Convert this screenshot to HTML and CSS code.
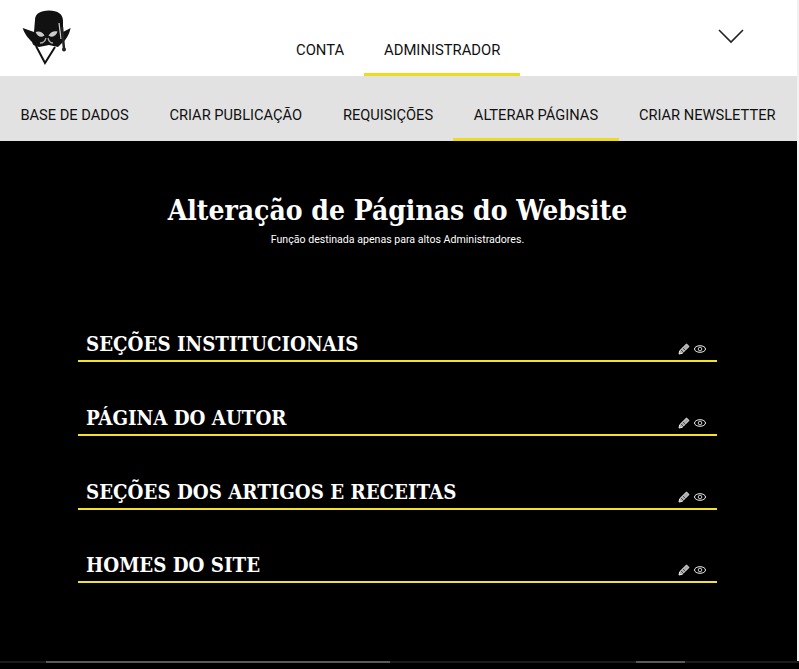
FILE: index.html
```html
<!DOCTYPE html>
<html>
  <head>
    <title>Alterar Páginas</title>
    <link rel="stylesheet" href="styles.css">
  </head>
  <body>
    <div class="frame">
      <header class="topbar">
        <a class="logo" href="#">
          <svg width="56" height="60" viewBox="0 0 56 60">
            <path d="M15 41 L24 58 L34 42" fill="none" stroke="#111" stroke-width="2"/>
            <path d="M1.700 23 L13 27 L14 15 C14 9 19 5.500 28 5.500 C37 5.500 42 9 42 16 L42 27 L49.700 23 C48 30 45 35 41 38 L37 42 L28 40 L18 42 C13 41 12 40 11 37 C7 33 3 28 1.700 23 Z" fill="#111"/>
            <path d="M14.500 27 C18 25.500 21.500 27 23.500 30.500 C20 33 16.500 31.500 14.500 27 Z" fill="#ccc"/>
            <path d="M36.500 26.500 C33 25.500 29.500 27 27.500 30.500 C31 33 35 31.500 36.500 26.500 Z" fill="#ccc"/>
            <path d="M25 33 C24 37 22 38 19 38 M27 33 C28 37 30 38 32 38" fill="none" stroke="#aaa" stroke-width="1.300"/>
            <path d="M38 18 L40 34" stroke="#ccc" stroke-width="1.200"/>
            <path d="M41 22 L43 44" stroke="#222" stroke-width="2.500"/>
            <circle cx="43" cy="44.500" r="2" fill="#222"/>
          </svg>
        </a>
        <nav class="tabs">
          <a class="tab" href="#">CONTA</a>
          <a class="tab active" href="#">ADMINISTRADOR</a>
        </nav>
        <a class="menu-toggle" href="#">
          <svg width="26" height="15" viewBox="0 0 26 15">
            <path d="M1 1 L13 13 L25 1" fill="none" stroke="#222" stroke-width="1.600"/>
          </svg>
        </a>
      </header>

      <nav class="subnav">
        <a class="tab" href="#">BASE DE DADOS</a>
        <a class="tab" href="#">CRIAR PUBLICAÇÃO</a>
        <a class="tab" href="#">REQUISIÇÕES</a>
        <a class="tab active" href="#">ALTERAR PÁGINAS</a>
        <a class="tab" href="#">CRIAR NEWSLETTER</a>
      </nav>

      <main class="content">
        <h1>Alteração de Páginas do Website</h1>
        <p class="lead">Função destinada apenas para altos Administradores.</p>

        <section class="rows">
          <div class="row">
            <h2>SEÇÕES INSTITUCIONAIS</h2>
            <div class="actions">
              <svg width="12" height="12" viewBox="0 0 12 12"><path d="M1 11 L1.700 7.800 L8.500 1 L11 3.500 L4.200 10.300 Z" fill="#aaa" stroke="#eee"/><path d="M3 7 L6 10 M5 5 L7.500 7.500" stroke="#222" stroke-width=".7"/></svg>
              <svg width="12" height="8" viewBox="0 0 12 8"><ellipse cx="6" cy="4" rx="5.500" ry="3.300" fill="none" stroke="#eee"/><circle cx="6" cy="4" r="1.800" fill="none" stroke="#ccc"/></svg>
            </div>
          </div>
          <div class="row">
            <h2>PÁGINA DO AUTOR</h2>
            <div class="actions">
              <svg width="12" height="12" viewBox="0 0 12 12"><path d="M1 11 L1.700 7.800 L8.500 1 L11 3.500 L4.200 10.300 Z" fill="#aaa" stroke="#eee"/><path d="M3 7 L6 10 M5 5 L7.500 7.500" stroke="#222" stroke-width=".7"/></svg>
              <svg width="12" height="8" viewBox="0 0 12 8"><ellipse cx="6" cy="4" rx="5.500" ry="3.300" fill="none" stroke="#eee"/><circle cx="6" cy="4" r="1.800" fill="none" stroke="#ccc"/></svg>
            </div>
          </div>
          <div class="row">
            <h2>SEÇÕES DOS ARTIGOS E RECEITAS</h2>
            <div class="actions">
              <svg width="12" height="12" viewBox="0 0 12 12"><path d="M1 11 L1.700 7.800 L8.500 1 L11 3.500 L4.200 10.300 Z" fill="#aaa" stroke="#eee"/><path d="M3 7 L6 10 M5 5 L7.500 7.500" stroke="#222" stroke-width=".7"/></svg>
              <svg width="12" height="8" viewBox="0 0 12 8"><ellipse cx="6" cy="4" rx="5.500" ry="3.300" fill="none" stroke="#eee"/><circle cx="6" cy="4" r="1.800" fill="none" stroke="#ccc"/></svg>
            </div>
          </div>
          <div class="row">
            <h2>HOMES DO SITE</h2>
            <div class="actions">
              <svg width="12" height="12" viewBox="0 0 12 12"><path d="M1 11 L1.700 7.800 L8.500 1 L11 3.500 L4.200 10.300 Z" fill="#aaa" stroke="#eee"/><path d="M3 7 L6 10 M5 5 L7.500 7.500" stroke="#222" stroke-width=".7"/></svg>
              <svg width="12" height="8" viewBox="0 0 12 8"><ellipse cx="6" cy="4" rx="5.500" ry="3.300" fill="none" stroke="#eee"/><circle cx="6" cy="4" r="1.800" fill="none" stroke="#ccc"/></svg>
            </div>
          </div>
        </section>
      </main>
    </div>

    <div class="scroll-track">
      <span class="thumb thumb-main"></span>
      <span class="thumb thumb-side"></span>
    </div>
  </body>
</html>
```

FILE: styles.css
```css
html, body {
  margin: 0;
  padding: 0;
  height: 669px;
  overflow: hidden;
  font: normal 14.800px Roboto, Arial, sans-serif;
  color: #111111;
  background: #000000;
}

a {
  color: inherit;
  text-decoration: none;
}

.frame {
  display: flex;
  flex-direction: column;
  height: 661px;
  border-right: 2px solid #f1f1f1;
  overflow: hidden;
}

.topbar {
  display: flex;
  height: 76px;
  background: #ffffff;
}

.logo {
  width: 56px;
  height: 60px;
  margin: 5px 0 0 21px;
}

.tabs {
  display: flex;
  align-self: flex-end;
  margin-left: 199px;
}

.tab {
  display: block;
  padding: 0 20px;
  border-bottom: 3px solid transparent;
  box-sizing: border-box;
  white-space: nowrap;
}

.tabs .tab {
  height: 40px;
  line-height: 28px;
}

.tab.active {
  border-bottom-color: #ecdb1e;
}

.menu-toggle {
  height: 15px;
  margin: 29px 0 0 198px;
}

.subnav {
  display: flex;
  height: 65px;
  background: #e2e2e2;
}

.subnav .tab {
  height: 65px;
  padding: 0 20.400px;
  font-size: 14.650px;
  line-height: 79px;
}

.content {
  flex: 1;
  padding: 53px 80px 0 78px;
  color: #ffffff;
  background: #000000;
}

h1 {
  margin: 0;
  font: bold 28px/34px "DejaVu Serif Condensed", "DejaVu Serif", serif;
  font-stretch: condensed;
  text-align: center;
}

.lead {
  margin: 5px 0 0;
  font-size: 10.600px;
  line-height: 13px;
  text-align: center;
}

.rows {
  margin-top: 80px;
}

.row {
  display: flex;
  align-items: flex-end;
  justify-content: space-between;
  height: 34px;
  margin-bottom: 37.750px;
  padding: 0 11px 0 8px;
  border-bottom: 2px solid #f2e22a;
}

h2 {
  margin: 0;
  font: bold 20.300px/32px "DejaVu Serif Condensed", "DejaVu Serif", serif;
  font-stretch: condensed;
  white-space: nowrap;
}

.actions {
  display: flex;
  align-items: center;
  gap: 4px;
  padding-bottom: 5px;
}

.scroll-track {
  position: relative;
  height: 2px;
  background: #1c1c1c;
}

.thumb {
  position: absolute;
  top: 0;
  height: 2px;
  background: #5a5a5a;
}

.thumb-main {
  left: 46px;
  width: 344px;
}

.thumb-side {
  left: 636px;
  width: 49px;
}
```
